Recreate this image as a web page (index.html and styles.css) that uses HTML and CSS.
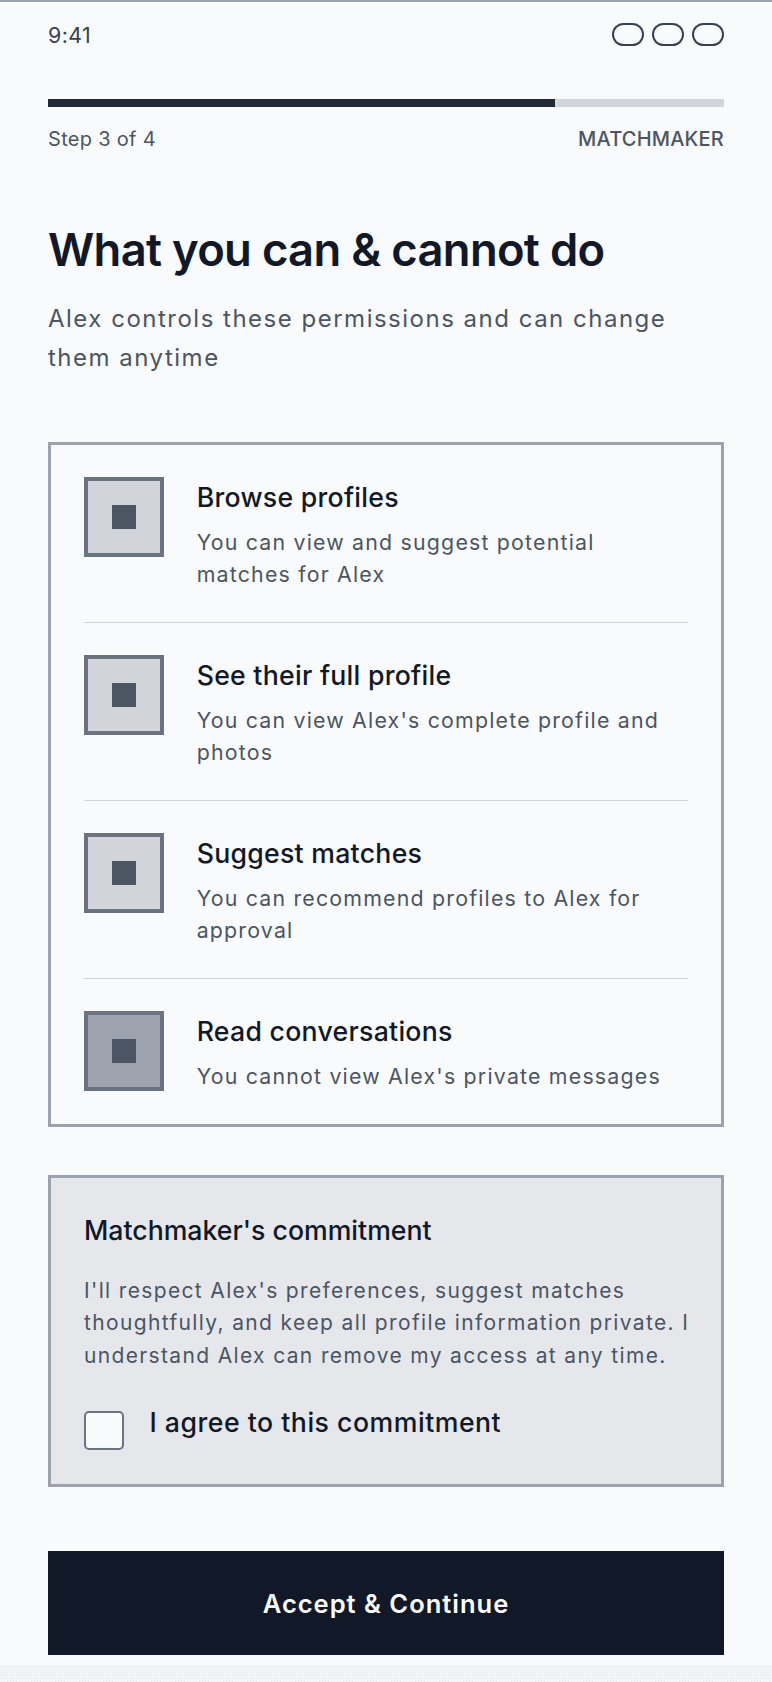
FILE: index.html
```html
<!DOCTYPE html>
<html lang="en">
<head>
<meta charset="utf-8">
<title>Matchmaker permissions</title>
<link rel="stylesheet" href="styles.css">
</head>
<body>
<div class="screen">
  <div class="status">
    <span class="time">9:41</span>
    <div class="status-icons">
      <span class="pill"></span>
      <span class="pill"></span>
      <span class="pill"></span>
    </div>
  </div>

  <div class="progress"><div class="progress-fill" style="width:75%"></div></div>
  <div class="step-row">
    <span class="step">Step 3 of 4</span>
    <span class="role">MATCHMAKER</span>
  </div>

  <h1 class="title">What you can &amp; cannot do</h1>
  <p class="subtitle">Alex controls these permissions and can change them anytime</p>

  <div class="perm-card">
    <div class="perm">
      <div class="perm-box"><span class="perm-dot"></span></div>
      <div class="perm-text">
        <div class="perm-title">Browse profiles</div>
        <div class="perm-desc">You can view and suggest potential matches for Alex</div>
      </div>
    </div>
    <div class="perm">
      <div class="perm-box"><span class="perm-dot"></span></div>
      <div class="perm-text">
        <div class="perm-title">See their full profile</div>
        <div class="perm-desc">You can view Alex's complete profile and photos</div>
      </div>
    </div>
    <div class="perm">
      <div class="perm-box"><span class="perm-dot"></span></div>
      <div class="perm-text">
        <div class="perm-title">Suggest matches</div>
        <div class="perm-desc">You can recommend profiles to Alex for approval</div>
      </div>
    </div>
    <div class="perm">
      <div class="perm-box perm-box-off"><span class="perm-dot"></span></div>
      <div class="perm-text">
        <div class="perm-title">Read conversations</div>
        <div class="perm-desc">You cannot view Alex's private messages</div>
      </div>
    </div>
  </div>

  <div class="commit">
    <div class="commit-title">Matchmaker's commitment</div>
    <p class="commit-text">I'll respect Alex's preferences, suggest matches thoughtfully, and keep all profile information private. I understand Alex can remove my access at any time.</p>
    <label class="agree">
      <span class="checkbox"></span>
      <span class="agree-text">I agree to this commitment</span>
    </label>
  </div>

  <button class="cta">Accept &amp; Continue</button>
  <div class="home-strip"></div>
</div>
</body>
</html>
```

FILE: styles.css
```css
* { box-sizing: border-box; }
html, body { margin: 0; padding: 0; }
body {
  background: #f9fafb;
  font-family: Inter, "Noto Sans", "Liberation Sans", sans-serif;
  color: #111827;
}
.screen {
  border-top: 2px solid #9ca3af;
  padding: 16.5px 48px 0;
  min-height: 1682px;
}
.status {
  display: flex;
  justify-content: space-between;
  align-items: center;
  height: 32px;
}
.time {
  font-size: 21.33px;
  line-height: 32px;
  color: #374151;
  letter-spacing: 0.02em;
}
.status-icons { display: flex; gap: 8px; }
.pill {
  width: 32px;
  height: 23.5px;
  border: 2px solid #374151;
  border-radius: 12px;
}
.progress {
  margin-top: 48.5px;
  height: 8px;
  background: #d1d5db;
}
.progress-fill { height: 100%; background: #1f2937; }
.step-row {
  margin-top: 16.5px;
  display: flex;
  justify-content: space-between;
  font-size: 20px;
  line-height: 30px;
  color: #4b5563;
}
.step { letter-spacing: 0.015em; }
.role { font-weight: 500; letter-spacing: 0.01em; }
.title {
  margin: 69.5px 0 0;
  font-size: 45.33px;
  line-height: 54.4px;
  font-weight: 600;
  letter-spacing: -0.015em;
  color: #111827;
}
.subtitle {
  margin: 21.5px 0 0;
  font-size: 24px;
  line-height: 39px;
  letter-spacing: 1.5px;
  color: #4b5563;
}
.perm-card {
  margin-top: 65px;
  border: 3px solid #9ca3af;
  padding: 0 33px;
}
.perm {
  display: flex;
  align-items: flex-start;
  gap: 32.67px;
  padding: 32px 0;
}
.perm + .perm { border-top: 1px solid #d1d5db; }
.perm-box {
  flex: none;
  width: 80px;
  height: 80px;
  border: 4px solid #6b7280;
  background: #d1d5db;
  display: flex;
  align-items: center;
  justify-content: center;
}
.perm-box-off { background: #9ca3af; }
.perm-dot { width: 24px; height: 24px; background: #4b5563; }
.perm-title {
  font-size: 26.67px;
  line-height: 40px;
  font-weight: 500;
  letter-spacing: 0.01em;
  color: #111827;
}
.perm-desc {
  margin-top: 9px;
  font-size: 21.33px;
  line-height: 32px;
  letter-spacing: 1.2px;
  color: #4b5563;
}
.commit {
  margin-top: 48.5px;
  border: 3px solid #9ca3af;
  background: #e5e7eb;
  padding: 33.5px 22px 34px 33px;
}
.commit-title {
  font-size: 26.67px;
  line-height: 37.33px;
  font-weight: 500;
  color: #111827;
}
.commit-text {
  margin: 26px 0 0;
  font-size: 21px;
  line-height: 32.2px;
  letter-spacing: 1.35px;
  color: #4b5563;
}
.agree {
  margin-top: 32px;
  display: flex;
  align-items: flex-start;
  gap: 26px;
}
.checkbox {
  flex: none;
  margin-top: 7px;
  width: 39.5px;
  height: 39.5px;
  border: 2px solid #6b7280;
  border-radius: 5px;
  background: #f9fafb;
}
.agree-text {
  font-size: 26.67px;
  line-height: 37.33px;
  font-weight: 500;
  letter-spacing: 0.5px;
  color: #111827;
}
.cta {
  display: block;
  width: 100%;
  margin-top: 64px;
  height: 104px;
  border: 0;
  background: #111827;
  color: #ffffff;
  font-family: Inter, "Noto Sans", "Liberation Sans", sans-serif;
  font-size: 25.5px;
  font-weight: 600;
  letter-spacing: 1px;
}
.home-strip {
  margin: 10px -48px 0;
  height: 17px;
  background-color: #f3f4f6;
  background-image: radial-gradient(circle, #e5e7eb 0.7px, transparent 0.8px);
  background-size: 3px 3px;
}
```
